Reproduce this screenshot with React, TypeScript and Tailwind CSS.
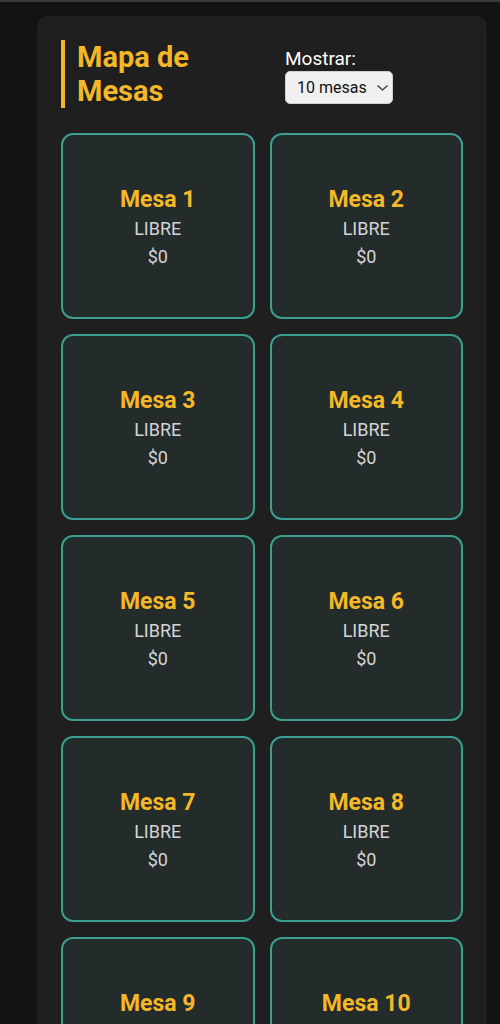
import { useState } from "react";

type Mesa = {
  id: number;
  estado: string;
  total: number;
};

export default function App() {
  const [cantidad, setCantidad] = useState(10);
  const mesas: Mesa[] = Array.from({ length: cantidad }, (_, i) => ({
    id: i + 1,
    estado: "LIBRE",
    total: 0,
  }));

  return (
    <div
      className="min-h-screen bg-[#121212] pt-[16px]"
      style={{ fontFamily: "Roboto, 'Noto Sans', sans-serif" }}
    >
      <div className="absolute top-0 left-0 h-[2px] w-full bg-[#3a3a3a]" />
      <div className="ml-[37px] w-[450px] rounded-t-[10px] bg-[#1f1f1f] px-[24px] pt-[24px] pb-[24px]">
        <div className="flex items-center gap-[56px]">
          <div className="w-[168px] border-l-[4px] border-[#f4b728] pl-[12px]">
            <h1 className="text-[29px] leading-[34px] font-bold text-[#f4b728]">
              Mapa de Mesas
            </h1>
          </div>
          <div className="flex flex-col pt-[4px]">
            <label className="text-[19px] leading-[22px] text-white">
              Mostrar:
            </label>
            <div className="relative mt-[1px] w-[108px]">
              <select
                value={cantidad}
                onChange={(e) => setCantidad(Number(e.target.value))}
                className="h-[33px] w-full appearance-none rounded-[5px] border border-[#d0d0d0] bg-[#f0f0f0] pl-[11px] text-[16px] text-[#111]"
              >
                <option value={10}>10 mesas</option>
                <option value={20}>20 mesas</option>
                <option value={30}>30 mesas</option>
              </select>
              <svg
                className="pointer-events-none absolute top-[14px] right-[5px]"
                width="11"
                height="6"
                viewBox="0 0 11 6"
                fill="none"
                stroke="#333"
                strokeWidth="1.2"
              >
                <polyline points="0.5,0.5 5.5,5 10.5,0.5" />
              </svg>
            </div>
          </div>
        </div>

        <div className="mt-[25px] grid grid-cols-2 gap-[15px]">
          {mesas.map((m) => (
            <div
              key={m.id}
              className="flex h-[186px] flex-col items-center justify-center rounded-[12px] border-2 border-[#3a9e90] bg-[#232b2b] pt-[2px]"
            >
              <h2 className="text-[23px] leading-[28px] font-bold text-[#f4b728]">
                Mesa {m.id}
              </h2>
              <p className="mt-[3px] text-[18px] leading-[24px] text-[#d4d4d4]">
                {m.estado}
              </p>
              <p className="mt-[4px] text-[18px] leading-[24px] text-[#d4d4d4]">
                ${m.total}
              </p>
            </div>
          ))}
        </div>
      </div>
    </div>
  );
}
